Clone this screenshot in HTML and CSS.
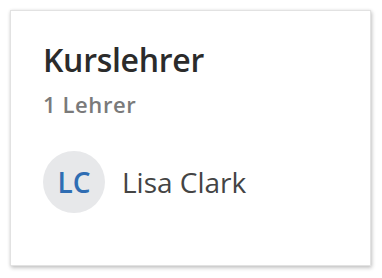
FILE: index.html
```html
<!DOCTYPE html>
<html lang="de">
<head>
<meta charset="utf-8">
<link rel="stylesheet" href="styles.css">
</head>
<body>
<div class="card">
  <h2 class="title">Kurslehrer</h2>
  <div class="count">1 Lehrer</div>
  <div class="person">
    <div class="avatar">LC</div>
    <div class="name">Lisa Clark</div>
  </div>
</div>
</body>
</html>
```
FILE: styles.css
```css
html, body {
  margin: 0;
  padding: 0;
  background: #ffffff;
}
body {
  padding: 10px 11px 12px 10px;
  font-family: "Open Sans", "Noto Sans", sans-serif;
}
.card {
  box-sizing: border-box;
  height: 256px;
  background: #fff;
  border: 1px solid #e2e2e2;
  box-shadow: 1px 2px 4px rgba(0,0,0,0.22), 0 0 3px rgba(0,0,0,0.08);
  padding: 33px 32px 0 32px;
}
.title {
  margin: 0;
  font-size: 32px;
  font-weight: 600;
  letter-spacing: -0.3px;
  color: #2b2b2b;
  line-height: 32px;
}
.count {
  margin-top: 18px;
  font-size: 22px;
  font-weight: 600;
  letter-spacing: 0.6px;
  color: #7a7a7a;
  line-height: 21px;
}
.person {
  display: flex;
  align-items: center;
  margin-top: 36px;
  gap: 17px;
}
.avatar {
  flex: none;
  width: 62px;
  height: 62px;
  border-radius: 50%;
  background: #e7e8ea;
  color: #2f6db3;
  font-size: 28px;
  font-weight: 600;
  display: flex;
  align-items: center;
  justify-content: center;
}
.name {
  font-size: 28px;
  color: #444;
}
```
